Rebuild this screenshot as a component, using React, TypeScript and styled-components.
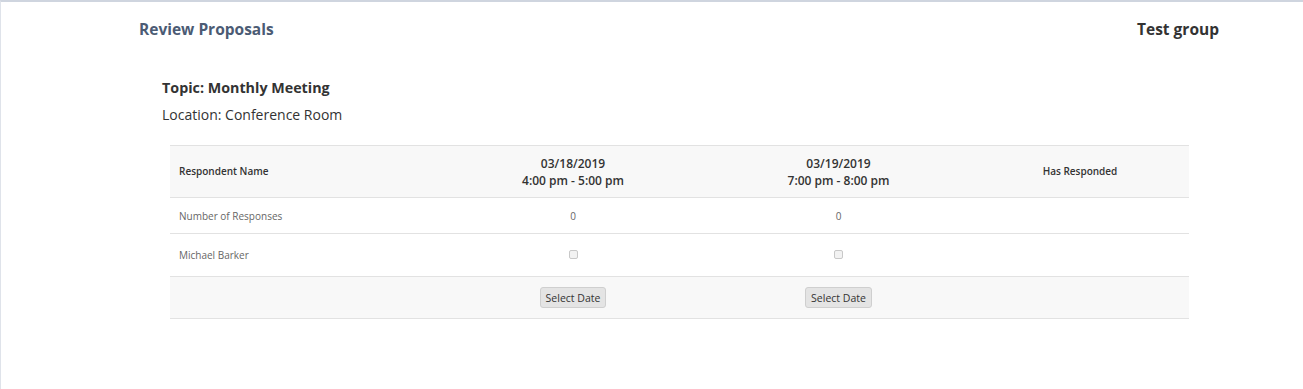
import styled, { createGlobalStyle } from 'styled-components';

const GlobalStyle = createGlobalStyle`
  html, body {
    margin: 0;
    padding: 0;
    background: #fff;
    font-family: "Open Sans", "Liberation Sans", sans-serif;
  }
`;

const Page = styled.div`
  height: 389px;
  box-sizing: border-box;
  border-top: 2px solid #cfd5df;
  border-left: 1px solid #dfe3ea;
`;

const TopBar = styled.header`
  display: flex;
  align-items: center;
  justify-content: space-between;
  height: 54px;
  padding: 0 84px 0 138px;
`;

const PageTitle = styled.h1`
  margin: 0;
  font-size: 15.5px;
  font-weight: 700;
  color: #4b5b74;
`;

const GroupName = styled.span`
  font-size: 15.5px;
  font-weight: 700;
  color: #333;
`;

const Details = styled.section`
  padding: 21px 0 0 161px;
  color: #333;
`;

const Topic = styled.div`
  font-size: 14.3px;
  font-weight: 700;
  line-height: 22px;
`;

const Location = styled.div`
  font-size: 14px;
  line-height: 22px;
  margin-top: 5px;
`;

const Table = styled.table`
  margin: 19px 0 0 169px;
  width: 1019px;
  border-collapse: collapse;
  font-size: 10px;
  color: #666;
  table-layout: fixed;
`;

const Row = styled.tr<{ $shaded?: boolean; $height: number }>`
  height: ${p => p.$height}px;
  background: ${p => (p.$shaded ? '#f8f8f8' : '#fff')};
  border-top: 1px solid #e2e2e2;
  border-bottom: 1px solid #e2e2e2;
`;

const HeadCell = styled.th<{ $left?: boolean; $large?: boolean }>`
  font-weight: 600;
  color: #333;
  font-size: ${p => (p.$large ? 12 : 10)}px;
  line-height: 17px;
  text-align: ${p => (p.$left ? 'left' : 'center')};
  padding: 0 9px;
`;

const Cell = styled.td<{ $left?: boolean }>`
  text-align: ${p => (p.$left ? 'left' : 'center')};
  padding: 0 9px;
  vertical-align: middle;
`;

const Check = styled.input`
  width: 9px;
  height: 9px;
  margin: 0;
  appearance: none;
  border: 1px solid #c8c8c8;
  border-radius: 2px;
  background: #f2f2f2;
`;

const SelectButton = styled.button`
  font-family: inherit;
  font-size: 10.5px;
  color: #333;
  padding: 2px 5px;
  height: 21px;
  background: #e4e4e4;
  border: 1px solid #cfcfcf;
  border-radius: 3px;
`;

const dates = [
  { day: '03/18/2019', time: '4:00 pm - 5:00 pm' },
  { day: '03/19/2019', time: '7:00 pm - 8:00 pm' },
];

export default function App() {
  return (
    <>
      <GlobalStyle />
      <Page>
        <TopBar>
          <PageTitle>Review Proposals</PageTitle>
          <GroupName>Test group</GroupName>
        </TopBar>
        <Details>
          <Topic>Topic: Monthly Meeting</Topic>
          <Location>Location: Conference Room</Location>
        </Details>
        <Table>
          <colgroup>
            <col style={{ width: 270 }} />
            <col style={{ width: 266 }} />
            <col style={{ width: 265 }} />
            <col />
          </colgroup>
          <thead>
            <Row $shaded $height={52}>
              <HeadCell $left>Respondent Name</HeadCell>
              {dates.map(d => (
                <HeadCell key={d.day} $large>
                  {d.day}
                  <br />
                  {d.time}
                </HeadCell>
              ))}
              <HeadCell>Has Responded</HeadCell>
            </Row>
          </thead>
          <tbody>
            <Row $height={36}>
              <Cell $left>Number of Responses</Cell>
              <Cell>0</Cell>
              <Cell>0</Cell>
              <Cell />
            </Row>
            <Row $height={43}>
              <Cell $left>Michael Barker</Cell>
              {dates.map(d => (
                <Cell key={d.day}>
                  <Check type="checkbox" />
                </Cell>
              ))}
              <Cell />
            </Row>
            <Row $shaded $height={42}>
              <Cell />
              {dates.map(d => (
                <Cell key={d.day}>
                  <SelectButton>Select Date</SelectButton>
                </Cell>
              ))}
              <Cell />
            </Row>
          </tbody>
        </Table>
      </Page>
    </>
  );
}
